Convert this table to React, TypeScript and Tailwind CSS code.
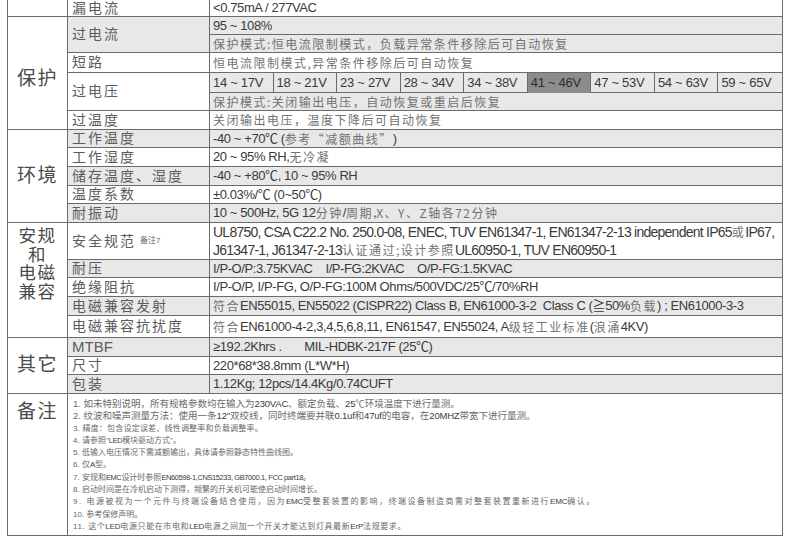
import React from "react";

const B = "border-[#6b6b6b]";

function C({ children }: { children: React.ReactNode }) {
  return <span className="font-['Noto_Sans_CJK_SC',sans-serif] text-[#727272] text-[12px] tracking-[1.5px]">{children}</span>;
}

function Label({ children, className = "" }: { children: React.ReactNode; className?: string }) {
  return (
    <div className={"w-[142px] shrink-0 border-r border-[#6b6b6b] pl-[4px] flex items-center text-[14px] tracking-[2px] text-[#5c5c5c] " + className}>
      {children}
    </div>
  );
}

const VALTXT = " flex items-center pl-[3px] text-[13px] tracking-[-0.4px] text-[#3a3a3a] whitespace-nowrap overflow-hidden ";

function Val({ children, h, gray, last }: { children?: React.ReactNode; h: string; gray?: boolean; last?: boolean }) {
  return (
    <div className={h + VALTXT + (gray ? "bg-[#e8e8e8] " : "bg-white ") + (last ? "" : "border-b border-[#6b6b6b]")}>
      {children}
    </div>
  );
}

function Row({ label, children, h, gray, labelGray }: { label: React.ReactNode; children?: React.ReactNode; h: string; gray?: boolean; labelGray?: boolean }) {
  return (
    <div className={"flex border-b border-[#6b6b6b] " + h}>
      <Label className={labelGray ? "bg-[#e8e8e8]" : "bg-white"}>{label}</Label>
      <div className={"flex-1" + VALTXT + (gray ? "bg-[#e8e8e8]" : "bg-white")}>{children}</div>
    </div>
  );
}

function Group({ title, children, className = "" }: { title: React.ReactNode; children: React.ReactNode; className?: string }) {
  return (
    <div className="flex">
      <div className={"w-[60px] shrink-0 border-r border-b border-[#6b6b6b] flex justify-center text-[19px] text-[#4a4a4a] tracking-[1.5px] bg-white " + className}>
        {title}
      </div>
      <div className="flex-1 flex flex-col">{children}</div>
    </div>
  );
}

const volts = ["14 ~ 17V", "18 ~ 21V", "23 ~ 27V", "28 ~ 34V", "34 ~ 38V", "41 ~ 46V", "47 ~ 53V", "54 ~ 63V", "59 ~ 65V"];

function L({ children }: { children: React.ReactNode }) {
  return <span className="text-[#3c3c3c] tracking-[-0.2px]">{children}</span>;
}

function LN({ children }: { children: React.ReactNode }) {
  return <span className="text-[#3c3c3c] text-[7.5px] tracking-[-0.4px]">{children}</span>;
}

const notes: { cls: string; node: React.ReactNode }[] = [
  { cls: "text-[9.5px]", node: <>1. 如未特别说明，所有规格参数均在输入为<L>230VAC</L>、额定负载、<L>25</L>℃环境温度下进行量测。</> },
  { cls: "text-[9.5px]", node: <>2. 纹波和噪声测量方法：使用一条<L>12"</L>双绞线，同时终端要并联<L>0.1uf</L>和<L>47uf</L>的电容，在<L>20MHZ</L>带宽下进行量测。</> },
  { cls: "text-[8px] tracking-[0.2px]", node: <>3. 精度：包含设定误差、线性调整率和负载调整率。</> },
  { cls: "text-[8px]", node: <>4. 请参照"<LN>LED</LN>模块驱动方式"。</> },
  { cls: "text-[8px]", node: <>5. 低输入电压情况下需减额输出，具体请参照静态特性曲线图。</> },
  { cls: "text-[8px]", node: <>6. 仅<L>A</L>型。</> },
  { cls: "text-[8px]", node: <>7. 安规和<LN>EMC</LN>设计时参照<LN>EN60598-1,CNS15233, GB7000.1, FCC part18</LN>。</> },
  { cls: "text-[8px]", node: <>8. 启动时间是在冷机启动下测得，频繁的开关机可能使启动时间增长。</> },
  { cls: "text-[8px] tracking-[1.5px]", node: <>9. 电源被视为一个元件与终端设备结合使用，因为<L>EMC</L>受整套装置的影响，终端设备制造商需对整套装置重新进行<L>EMC</L>确认。</> },
  { cls: "text-[8px]", node: <>10. 参考保修声明。</> },
  { cls: "text-[8px] tracking-[0.6px]", node: <>11. 这个<L>LED</L>电源只能在市电和<L>LED</L>电源之间加一个开关才能达到灯具最新<L>ErP</L>法规要求。</> },
];

export default function App() {
  return (
    <div className="w-[790px] h-[540px] bg-white overflow-hidden font-['Liberation_Sans','Noto_Sans_CJK_SC',sans-serif]">
      <div className={"ml-[7px] w-[776px] border-l border-r " + B}>
        {/* 漏电流 row (continued group) */}
        <div className="flex">
          <div className="w-[60px] shrink-0 border-r border-b border-[#6b6b6b] bg-white" />
          <div className="flex-1 flex flex-col">
            <Row label="漏电流" h="h-[17px]">&lt;0.75mA / 277VAC</Row>
          </div>
        </div>

        {/* 保护 */}
        <Group title="保护" className="items-center pt-[12px]">
          <div className="flex border-b border-[#6b6b6b]">
            <Label className="bg-[#e8e8e8]">过电流</Label>
            <div className="flex-1 flex flex-col">
              <Val h="h-[18px]" gray>95 ~ 108%</Val>
              <Val h="h-[17px]" gray last>
                <C>保护模式:恒电流限制模式，负载异常条件移除后可自动恢复</C>
              </Val>
            </div>
          </div>
          <Row label="短路" h="h-[20px]">
            <C>恒电流限制模式,异常条件移除后可自动恢复</C>
          </Row>
          <div className="flex border-b border-[#6b6b6b]">
            <Label className="bg-white">过电压</Label>
            <div className="flex-1 flex flex-col">
              <div className="h-[20px] grid grid-cols-9 border-b border-[#6b6b6b] bg-[#e8e8e8] text-[13px] tracking-[-0.3px] text-[#3a3a3a]">
                {volts.map((v, i) => (
                  <div
                    key={v}
                    className={
                      "flex items-center pl-[3px] whitespace-nowrap " +
                      (i < 8 ? "border-r border-[#6b6b6b] " : "") +
                      (i === 5 ? "bg-[#8c8c8c] text-[#2e2e2e]" : "")
                    }
                  >
                    {v}
                  </div>
                ))}
              </div>
              <Val h="h-[17px]" gray last>
                <C>保护模式:关闭输出电压，自动恢复或重启后恢复</C>
              </Val>
            </div>
          </div>
          <Row label="过温度" h="h-[19px]">
            <C>关闭输出电压，温度下降后可自动恢复</C>
          </Row>
        </Group>

        {/* 环境 */}
        <Group title="环境" className="items-center">
          <Row label="工作温度" h="h-[18px]" gray labelGray>
            -40 ~ +70℃ (<C>参考“减额曲线”</C>)
          </Row>
          <Row label="工作湿度" h="h-[19px]">
            20 ~ 95% RH,<C>无冷凝</C>
          </Row>
          <Row label="储存温度、湿度" h="h-[19px]" gray labelGray>
            -40 ~ +80℃, 10 ~ 95% RH
          </Row>
          <Row label="温度系数" h="h-[18px]">
            ±0.03%/℃ (0~50℃)
          </Row>
          <Row label="耐振动" h="h-[19px]" gray labelGray>
            10 ~ 500Hz, 5G 12<C>分钟</C>/<C>周期</C>, <C>X、Y、Z轴各72分钟</C>
          </Row>
        </Group>

        {/* 安规和电磁兼容 */}
        <Group title={<div className="flex flex-col items-center text-[17.5px] leading-[18.5px] pt-[4px]"><span>安规</span><span>和</span><span>电磁</span><span>兼容</span></div>}>
          <div className="flex border-b border-[#6b6b6b] h-[37px]">
            <Label className="bg-white">
              安全规范<span className="ml-[4px] text-[8px] tracking-normal text-[#666]">备注7</span>
            </Label>
            <div className="flex-1 flex flex-col justify-center pl-[3px] text-[14px] tracking-[-0.75px] leading-[17px] text-[#3a3a3a] whitespace-nowrap overflow-hidden bg-white">
              <div>
                UL8750, CSA C22.2 No. 250.0-08, ENEC, TUV EN61347-1, EN61347-2-13 independent IP65<C>或</C>IP67,
              </div>
              <div>
                J61347-1, J61347-2-13<C>认证通过;设计参照</C>UL60950-1, TUV EN60950-1
              </div>
            </div>
          </div>
          <Row label="耐压" h="h-[18px]" gray labelGray>
            I/P-O/P:3.75KVAC&nbsp;&nbsp;&nbsp;&nbsp;I/P-FG:2KVAC&nbsp;&nbsp;&nbsp;&nbsp;O/P-FG:1.5KVAC
          </Row>
          <Row label="绝缘阻抗" h="h-[19px]">
            I/P-O/P, I/P-FG, O/P-FG:100M Ohms/500VDC/25℃/70%RH
          </Row>
          <Row label="电磁兼容发射" h="h-[19px]" gray labelGray>
            <C>符合</C>EN55015, EN55022 (CISPR22) Class B, EN61000-3-2&nbsp; Class C (≧50%<C>负载</C>) ; EN61000-3-3
          </Row>
          <Row label="电磁兼容抗扰度" h="h-[22px]">
            <C>符合</C>EN61000-4-2,3,4,5,6,8,11, EN61547, EN55024, A<C>级轻工业标准</C>(<C>浪涌</C> 4KV)
          </Row>
        </Group>

        {/* 其它 */}
        <Group title="其它" className="items-center">
          <Row label={<span className="text-[15px] tracking-normal">MTBF</span>} h="h-[19px]" gray labelGray>
            ≥192.2Khrs .&nbsp;&nbsp;&nbsp;&nbsp;&nbsp;&nbsp; MIL-HDBK-217F (25℃)
          </Row>
          <Row label="尺寸" h="h-[18px]">
            220*68*38.8mm (L*W*H)
          </Row>
          <Row label="包装" h="h-[19px]" gray labelGray>
            1.12Kg; 12pcs/14.4Kg/0.74CUFT
          </Row>
        </Group>

        {/* 备注 */}
        <div className="flex border-b border-[#6b6b6b] h-[142px]">
          <div className="w-[60px] shrink-0 border-r border-[#6b6b6b] flex justify-center pt-[4px] text-[19px] tracking-[1.5px] text-[#4a4a4a]">
            备注
          </div>
          <div className="flex-1 flex flex-col pl-[5px] pt-[4px] leading-[12.3px] text-[#6a6a6a] whitespace-nowrap">
            {notes.map((n, i) => (
              <div key={i} className={"h-[12.3px] flex items-center " + n.cls}>
                <span>{n.node}</span>
              </div>
            ))}
          </div>
        </div>
      </div>
    </div>
  );
}
